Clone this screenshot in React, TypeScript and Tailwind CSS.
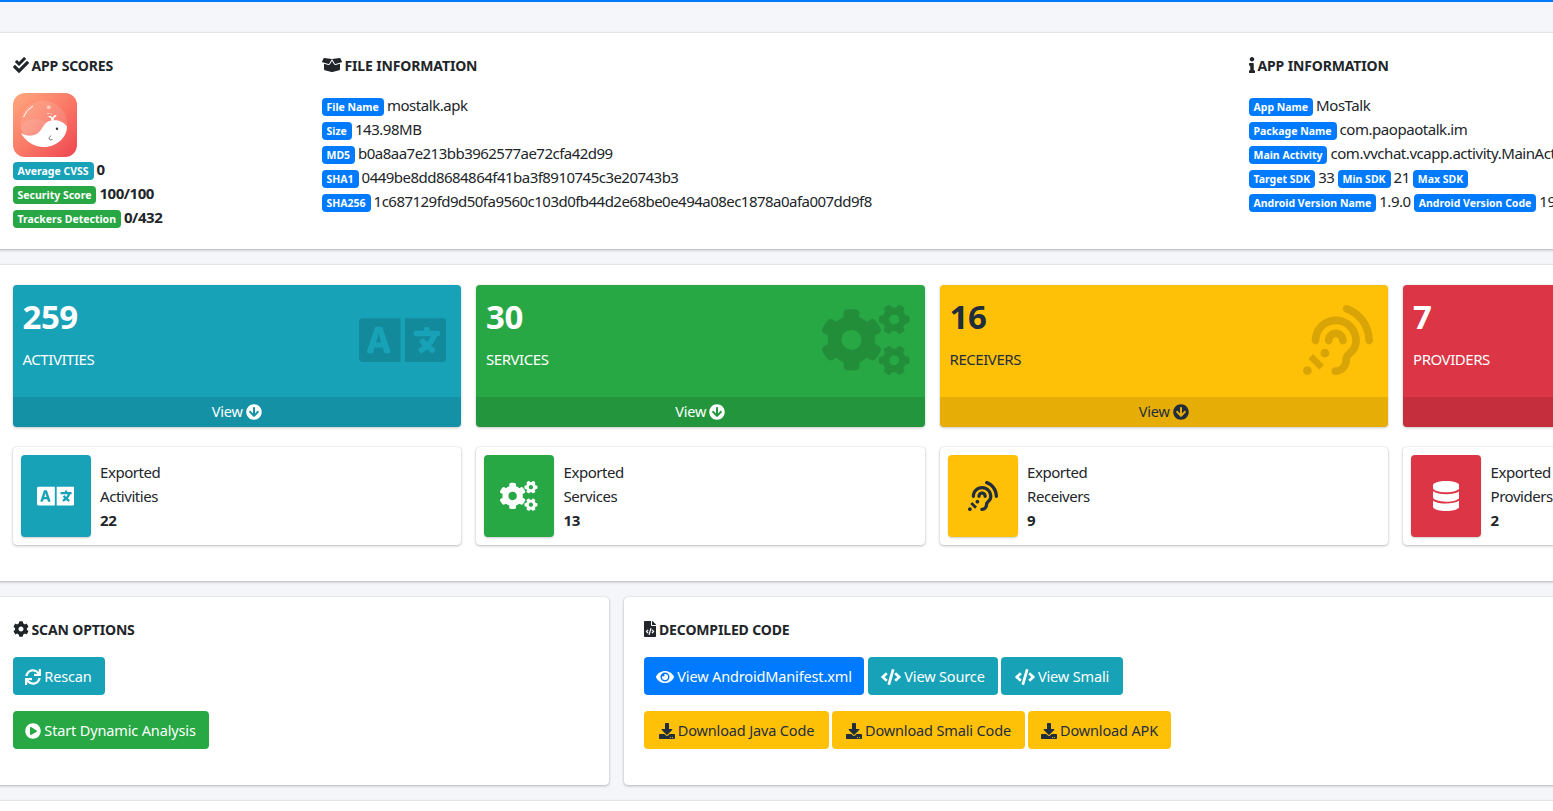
import type { ReactNode } from 'react';
import {
  FaArrowCircleDown,
  FaAssistiveListeningSystems,
  FaBoxOpen,
  FaCheckDouble,
  FaCode,
  FaCog,
  FaCogs,
  FaDatabase,
  FaDownload,
  FaEye,
  FaFileCode,
  FaInfo,
  FaLanguage,
  FaPlayCircle,
  FaSync,
} from 'react-icons/fa';

const stats = [
  { count: '259', label: 'ACTIVITIES', icon: <FaLanguage className="w-[1.25em]" />, box: 'bg-[#17a2b8] text-white' },
  { count: '30', label: 'SERVICES', icon: <FaCogs className="w-[1.25em]" />, box: 'bg-[#28a745] text-white' },
  { count: '16', label: 'RECEIVERS', icon: <FaAssistiveListeningSystems />, box: 'bg-[#ffc107] text-[#1f2d3d]' },
  { count: '7', label: 'PROVIDERS', icon: <FaDatabase className="w-[0.875em]" />, box: 'bg-[#dc3545] text-white' },
];

const exported = [
  { label: 'Activities', count: '22', icon: <FaLanguage className="w-[1.25em]" />, box: 'bg-[#17a2b8] text-white' },
  { label: 'Services', count: '13', icon: <FaCogs className="w-[1.25em]" />, box: 'bg-[#28a745] text-white' },
  { label: 'Receivers', count: '9', icon: <FaAssistiveListeningSystems />, box: 'bg-[#ffc107] text-[#1f2d3d]' },
  { label: 'Providers', count: '2', icon: <FaDatabase className="w-[0.875em]" />, box: 'bg-[#dc3545] text-white' },
];

function Badge({ children, color = 'bg-[#007bff]' }: { children: ReactNode; color?: string }) {
  return (
    <span className={`mt-[3px] inline-flex h-[18px] items-center rounded-[4px] px-[5px] text-[10.5px] leading-none font-bold tracking-[0em] text-white ${color}`}>
      {children}
    </span>
  );
}

function Heading({ icon, children }: { icon: ReactNode; children: ReactNode }) {
  return (
    <h5 className="flex h-[20px] items-center gap-[3px] text-[14px] font-bold tracking-[-0.01em] text-[#212529]">
      <span className="text-[16px]">{icon}</span>
      {children}
    </h5>
  );
}

function Row({ children }: { children: ReactNode }) {
  return <div className="flex h-[24px] items-start gap-[3px] leading-[20px] whitespace-nowrap">{children}</div>;
}

function Btn({ icon, children, className }: { icon: ReactNode; children: ReactNode; className: string }) {
  return (
    <button className={`flex h-[38px] items-center justify-center gap-[3px] rounded-[4px] pt-px text-[14.5px] tracking-[-0.01em] ${className}`}>
      <span className="text-[16px]">{icon}</span>
      {children}
    </button>
  );
}

function AppIcon() {
  return (
    <svg width="64" height="64" viewBox="0 0 64 64" className="block">
      <defs>
        <linearGradient id="iconBg" x1="0" y1="0" x2="1" y2="1">
          <stop offset="0" stopColor="#ffa97e" />
          <stop offset="0.55" stopColor="#f97565" />
          <stop offset="1" stopColor="#ee4450" />
        </linearGradient>
      </defs>
      <rect width="64" height="64" rx="12" fill="url(#iconBg)" />
      <circle cx="30.7" cy="31" r="23.4" fill="#ffffff" fillOpacity="0.12" />
      <path d="M7.6 34 C14 24 26 24 34 30 L30 50 C18 52 10 44 7.6 34 Z" fill="#ffffff" fillOpacity="0.1" />
      <path d="M8 40 C12 43 20 44 25 40 C29 37 30 32 34 29 C39 26 49 26 54 33.5 C54 44 44 54 31 54 C21 54 12 48 8 40 Z" fill="#fff" />
      <path d="M38.5 28 L38 25 L34.5 23.5 L37.5 23 L39.5 24.5 L41.5 22 L44 22.5 L41 25 L40.5 28 Z" fill="#fff" />
      <circle cx="35.7" cy="14.3" r="2" fill="#fff" fillOpacity="0.5" />
      <circle cx="35" cy="20.5" r="0.8" fill="#fff" fillOpacity="0.7" />
      <circle cx="38" cy="20.5" r="0.7" fill="#fff" fillOpacity="0.7" />
      <circle cx="44" cy="35.7" r="1.2" fill="#33333a" />
      <path d="M38 42.5 q-3 2.5 -1.5 4 q1 0.8 3 0" fill="none" stroke="#55555a" strokeWidth="0.8" />
      <path d="M10.5 24 A22 22 0 0 1 20 13" fill="none" stroke="#fff" strokeWidth="1" />
    </svg>
  );
}

export default function App() {
  return (
    <div className="h-[811px] w-full overflow-hidden border-t-2 border-[#007bff] bg-[#f4f6f9] font-['Noto_Sans',sans-serif] text-[15px] tracking-[-0.03em] text-[#212529]">
      <div className="-ml-[7.5px] w-[1879px] pt-[31px]">
        {/* App / file / app info */}
        <section className="h-[216px] bg-white px-[20px] pt-[22px] shadow-[0_0_1px_rgba(0,0,0,0.2),0_1px_3px_rgba(0,0,0,0.25)]">
          <div className="grid grid-cols-[309px_927px_603px]">
            <div>
              <Heading icon={<FaCheckDouble />}>APP SCORES</Heading>
              <div className="mt-[18px]">
                <AppIcon />
              </div>
              <div className="mt-[2px] font-bold">
                <Row><Badge color="bg-[#17a2b8]">Average CVSS</Badge> 0</Row>
                <Row><Badge color="bg-[#28a745]">Security Score</Badge> 100/100</Row>
                <Row><Badge color="bg-[#28a745]">Trackers Detection</Badge> 0/432</Row>
              </div>
            </div>
            <div>
              <Heading icon={<FaBoxOpen className="w-[1.25em]" />}>FILE INFORMATION</Heading>
              <div className="mt-[20px]">
                <Row><Badge>File Name</Badge> mostalk.apk</Row>
                <Row><Badge>Size</Badge> 143.98MB</Row>
                <Row><Badge>MD5</Badge> <span className="tracking-[-0.035em]">b0a8aa7e213bb3962577ae72cfa42d99</span></Row>
                <Row><Badge>SHA1</Badge> <span className="tracking-[-0.035em]">0449be8dd8684864f41ba3f8910745c3e20743b3</span></Row>
                <Row><Badge>SHA256</Badge> <span className="tracking-[-0.035em]">1c687129fd9d50fa9560c103d0fb44d2e68be0e494a08ec1878a0afa007dd9f8</span></Row>
              </div>
            </div>
            <div>
              <Heading icon={<FaInfo className="w-[0.375em]" />}>APP INFORMATION</Heading>
              <div className="mt-[20px]">
                <Row><Badge>App Name</Badge> MosTalk</Row>
                <Row><Badge>Package Name</Badge> com.paopaotalk.im</Row>
                <Row><Badge>Main Activity</Badge> com.vvchat.vcapp.activity.MainActivity</Row>
                <Row><Badge>Target SDK</Badge> 33 <Badge>Min SDK</Badge> 21 <Badge>Max SDK</Badge></Row>
                <Row><Badge>Android Version Name</Badge> 1.9.0 <Badge>Android Version Code</Badge> 19</Row>
              </div>
            </div>
          </div>
        </section>

        {/* Component counts */}
        <section className="mt-[16px] h-[316px] bg-white px-[20px] pt-[20px] shadow-[0_0_1px_rgba(0,0,0,0.2),0_1px_3px_rgba(0,0,0,0.25)]">
          <div className="grid grid-cols-4 gap-x-[15px]">
            {stats.map((s) => (
              <div key={s.label} className={`relative flex h-[142px] flex-col rounded-[4px] shadow-[0_0_1px_rgba(0,0,0,0.125),0_1px_3px_rgba(0,0,0,0.2)] ${s.box}`}>
                <div className="flex-1 px-[10px] pt-[10px]">
                  <div className="text-[33px] leading-[44px] font-bold">{s.count}</div>
                  <div className="mt-[8px] text-[15px] leading-[24px]">{s.label}</div>
                </div>
                <div className="absolute top-[20px] right-[15px] text-[70px] leading-none text-black/15">{s.icon}</div>
                <div className="flex h-[30px] items-center justify-center gap-[3px] rounded-b-[4px] bg-black/10 text-[14.5px] tracking-[-0.01em]">
                  View <FaArrowCircleDown className="text-[16px]" />
                </div>
              </div>
            ))}
          </div>
          <div className="mt-[20px] grid grid-cols-4 gap-x-[15px]">
            {exported.map((e) => (
              <div key={e.label} className="flex h-[98px] rounded-[4px] bg-white p-[8px] shadow-[0_0_1px_rgba(0,0,0,0.2),0_1px_3px_rgba(0,0,0,0.25)]">
                <div className={`flex w-[70px] items-center justify-center rounded-[4px] text-[30px] shadow-[0_1px_2px_rgba(0,0,0,0.2)] ${e.box}`}>
                  {e.icon}
                </div>
                <div className="pt-[5px] pl-[9.5px] leading-[24px]">
                  <div>Exported</div>
                  <div>{e.label}</div>
                  <div className="font-bold">{e.count}</div>
                </div>
              </div>
            ))}
          </div>
        </section>

        {/* Options */}
        <div className="mt-[16px] grid grid-cols-[616.5px_1fr] gap-x-[15px]">
          <section className="h-[188px] rounded-[4px] bg-white px-[20px] pt-[22px] shadow-[0_0_1px_rgba(0,0,0,0.2),0_1px_3px_rgba(0,0,0,0.25)]">
            <Heading icon={<FaCog />}>SCAN OPTIONS</Heading>
            <Btn icon={<FaSync />} className="mt-[18px] w-[92px] bg-[#17a2b8] text-white">Rescan</Btn>
            <Btn icon={<FaPlayCircle />} className="mt-[16px] w-[196px] bg-[#28a745] text-white">Start Dynamic Analysis</Btn>
          </section>
          <section className="h-[188px] rounded-[4px] bg-white px-[20px] pt-[22px] shadow-[0_0_1px_rgba(0,0,0,0.2),0_1px_3px_rgba(0,0,0,0.25)]">
            <Heading icon={<FaFileCode className="w-[0.75em]" />}>DECOMPILED CODE</Heading>
            <div className="mt-[18px] flex gap-x-[4px]">
              <Btn icon={<FaEye className="w-[1.125em]" />} className="w-[220px] bg-[#007bff] text-white">View AndroidManifest.xml</Btn>
              <Btn icon={<FaCode className="w-[1.25em]" />} className="w-[130px] bg-[#17a2b8] text-white">View Source</Btn>
              <Btn icon={<FaCode className="w-[1.25em]" />} className="-ml-px w-[122px] bg-[#17a2b8] text-white">View Smali</Btn>
            </div>
            <div className="mt-[16px] flex gap-x-[3px]">
              <Btn icon={<FaDownload />} className="w-[185px] bg-[#ffc107] text-[#1f2d3d]">Download Java Code</Btn>
              <Btn icon={<FaDownload />} className="w-[193px] bg-[#ffc107] text-[#1f2d3d]">Download Smali Code</Btn>
              <Btn icon={<FaDownload />} className="w-[143px] bg-[#ffc107] text-[#1f2d3d]">Download APK</Btn>
            </div>
          </section>
        </div>

        <section className="mt-[16px] h-[40px] bg-white shadow-[0_0_1px_rgba(0,0,0,0.2),0_1px_3px_rgba(0,0,0,0.25)]" />
      </div>
    </div>
  );
}
